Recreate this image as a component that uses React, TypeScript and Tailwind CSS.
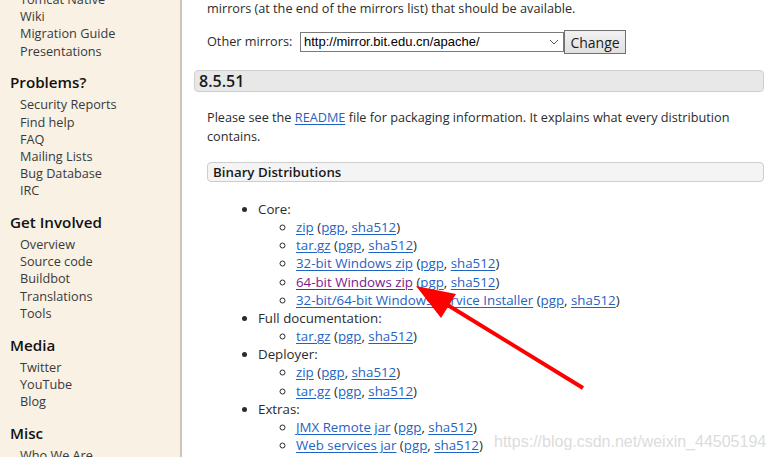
import React from "react";

const sideNav: { title: string; links: string[] }[] = [
  { title: "", links: ["Tomcat Native", "Wiki", "Migration Guide", "Presentations"] },
  { title: "Problems?", links: ["Security Reports", "Find help", "FAQ", "Mailing Lists", "Bug Database", "IRC"] },
  { title: "Get Involved", links: ["Overview", "Source code", "Buildbot", "Translations", "Tools"] },
  { title: "Media", links: ["Twitter", "YouTube", "Blog"] },
  { title: "Misc", links: ["Who We Are"] },
];

type Item = { label: string; visited?: boolean };
const groups: { title: string; items: Item[] }[] = [
  {
    title: "Core:",
    items: [
      { label: "zip" },
      { label: "tar.gz" },
      { label: "32-bit Windows zip" },
      { label: "64-bit Windows zip", visited: true },
      { label: "32-bit/64-bit Windows Service Installer" },
    ],
  },
  { title: "Full documentation:", items: [{ label: "tar.gz" }] },
  { title: "Deployer:", items: [{ label: "zip" }, { label: "tar.gz" }] },
  { title: "Extras:", items: [{ label: "JMX Remote jar" }, { label: "Web services jar" }] },
];

const link = "text-[#1f63c4] underline underline-offset-2";

function Sidebar() {
  return (
    <div className="w-[182px] shrink-0 bg-[#f8f1e4] border-r-2 border-[#c9c6c0] pl-[10px] -mt-[9px]">
      {sideNav.map((s, i) => (
        <div key={i}>
          {s.title && (
            <h3 className="mt-[12.5px] mb-[4px] text-[15.2px] leading-[20px] font-semibold text-[#111]">{s.title}</h3>
          )}
          <ul className="pl-[10px]">
            {s.links.map(l => (
              <li key={l} className="text-[12.7px] leading-[17.2px] text-[#3a3a3a]">{l}</li>
            ))}
          </ul>
        </div>
      ))}
    </div>
  );
}

export default function App() {
  return (
    <div
      className="relative w-[774px] h-[457px] overflow-hidden flex bg-white text-[#2b2b2b]"
      style={{ fontFamily: '"Open Sans", "Noto Sans", sans-serif' }}
    >
      <Sidebar />
      <main className="flex-1 pl-[12px] pr-[10px]">
        <div className="pl-[13px]">
          <p className="-mt-[1px] text-[12.7px] leading-[19px]">
            mirrors (at the end of the mirrors list) that should be available.
          </p>
          <div className="mt-[12px] flex items-center h-[24px] text-[12.7px]">
            <span className="w-[93px] shrink-0">Other mirrors:</span>
            <div className="w-[264px] h-[20px] border border-[#7a7a7a] bg-white flex items-center justify-between pl-[3px] pr-[3px]">
              <span className="text-[13px] text-black" style={{ fontFamily: '"Liberation Sans", Arial, sans-serif' }}>
                http://mirror.bit.edu.cn/apache/
              </span>
              <svg width="10" height="6" viewBox="0 0 10 6" className="mr-[1px]">
                <path d="M1 1l4 4 4-4" fill="none" stroke="#555" strokeWidth="1" />
              </svg>
            </div>
            <button className="w-[62px] h-[24px] border border-[#707070] bg-gradient-to-b from-[#f2f2f2] to-[#e0e0e0] text-[14px] text-[#1b1b1b]">
              Change
            </button>
          </div>
        </div>

        <h2 className="mt-[16px] h-[22px] border border-[#cfcfcf] bg-[#e8e8e8] rounded-[4px] pl-[4px] text-[16px] leading-[20px] font-semibold text-[#1a1a1a]">
          8.5.51
        </h2>

        <div className="pl-[13px]">
          <p className="mt-[16px] text-[12.7px] leading-[19px]">
            Please see the <span className={link}>README</span> file for packaging information. It explains what every distribution contains.
          </p>
          <h3 className="mt-[16px] h-[20px] border border-[#cdcdcd] bg-[#f4f4f4] rounded-[4px] pl-[5px] text-[13.3px] leading-[18px] font-semibold text-[#1a1a1a]">
            Binary Distributions
          </h3>
          <ul className="mt-[18px] pl-[51px] list-disc text-[13.3px] leading-[18.15px]">
            {groups.map(g => (
              <li key={g.title}>
                {g.title}
                <ul className="pl-[38px] list-[circle]">
                  {g.items.map((it, i) => (
                    <li key={i}>
                      <span className={it.visited ? "text-[#7a1a8c] underline underline-offset-2" : link}>{it.label}</span>{" "}
                      (<span className={link}>pgp</span>, <span className={link}>sha512</span>)
                    </li>
                  ))}
                </ul>
              </li>
            ))}
          </ul>
        </div>
      </main>

      <svg className="absolute inset-0 pointer-events-none" width="774" height="457" viewBox="0 0 774 457">
        <line x1="583" y1="388" x2="446" y2="304" stroke="#ff0000" strokeWidth="4" />
        <polygon points="416,286 456,294 441,318" fill="#ff0000" />
      </svg>

      <div
        className="absolute left-[494px] top-[430px] text-[16px] text-[#dcdcdc] pointer-events-none"
        style={{ fontFamily: '"Liberation Sans", Arial, sans-serif' }}
      >
        https://blog.csdn.net/weixin_44505194
      </div>
    </div>
  );
}
